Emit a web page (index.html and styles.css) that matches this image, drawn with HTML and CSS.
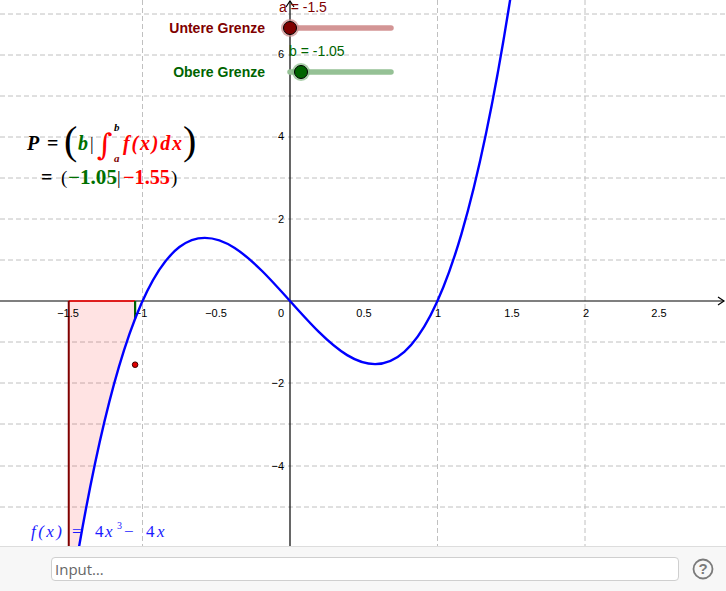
FILE: index.html
```html
<!DOCTYPE html>
<html lang="de">
<head>
<meta charset="utf-8">
<title>Integral</title>
<link rel="stylesheet" href="styles.css">
</head>
<body>
<div class="app">
  <div class="graphics">
    <svg class="canvas" width="726" height="546" viewBox="0 0 726 546" xmlns="http://www.w3.org/2000/svg">
      <g class="grid">
        <line x1="0" y1="14" x2="726" y2="14"/>
        <line x1="0" y1="55" x2="726" y2="55"/>
        <line x1="0" y1="96" x2="726" y2="96"/>
        <line x1="0" y1="137" x2="726" y2="137"/>
        <line x1="0" y1="178" x2="726" y2="178"/>
        <line x1="0" y1="219" x2="726" y2="219"/>
        <line x1="0" y1="260" x2="726" y2="260"/>
        <line x1="0" y1="342" x2="726" y2="342"/>
        <line x1="0" y1="383" x2="726" y2="383"/>
        <line x1="0" y1="424" x2="726" y2="424"/>
        <line x1="0" y1="466" x2="726" y2="466"/>
        <line x1="0" y1="507" x2="726" y2="507"/>
        <line x1="142.5" y1="0" x2="142.5" y2="546"/>
        <line x1="437.5" y1="0" x2="437.5" y2="546"/>
        <line x1="585" y1="0" x2="585" y2="546"/>
      </g>
      <path class="area" d="M68.75 301 L135.125 301 L135.125 318.69 C113 375.6 90.875 467.455 68.75 609.25 Z"/>
      <g class="axes">
        <line x1="0" y1="301" x2="724" y2="301"/>
        <polyline points="718,297 724,301 718,305"/>
        <line x1="290" y1="1" x2="290" y2="546"/>
        <polyline points="286,7 290,1 294,7"/>
      </g>
      <line class="edge-top" x1="68.75" y1="301" x2="135.125" y2="301"/>
      <line class="edge-a" x1="68.75" y1="301" x2="68.75" y2="546"/>
      <line class="edge-b" x1="135.125" y1="301" x2="135.125" y2="318.7"/>
      <g class="ticks">
        <text x="68" y="317" text-anchor="middle">−1.5</text>
        <text x="141" y="317" text-anchor="middle">−1</text>
        <text x="216" y="317" text-anchor="middle">−0.5</text>
        <text x="284" y="317" text-anchor="end">0</text>
        <text x="364" y="317" text-anchor="middle">0.5</text>
        <text x="438" y="317" text-anchor="middle">1</text>
        <text x="512" y="317" text-anchor="middle">1.5</text>
        <text x="586" y="317" text-anchor="middle">2</text>
        <text x="659" y="317" text-anchor="middle">2.5</text>
        <text x="284" y="58" text-anchor="end">6</text>
        <text x="284" y="140" text-anchor="end">4</text>
        <text x="284" y="223" text-anchor="end">2</text>
        <text x="284" y="387" text-anchor="end">−2</text>
        <text x="284" y="470" text-anchor="end">−4</text>
      </g>
      <path class="curve" d="M68.75 609.25 C218.71 -351.8 368.67 981.14 518.625 -56.39"/>
      <circle class="pt" cx="135.1" cy="364.7" r="2.8"/>

      <text class="slider-name red" x="265" y="33" text-anchor="end">Untere Grenze</text>
      <line class="track-a" x1="290" y1="28" x2="391" y2="28"/>
      <circle class="halo-a" cx="290" cy="28" r="9"/>
      <circle class="knob-a" cx="290" cy="28" r="6.5"/>
      <text class="slider-val red" x="279" y="12">a = -1.5</text>

      <text class="slider-name green" x="265" y="77" text-anchor="end">Obere Grenze</text>
      <line class="track-b" x1="290" y1="72" x2="391" y2="72"/>
      <circle class="halo-b" cx="301" cy="72" r="9"/>
      <circle class="knob-b" cx="301" cy="72" r="6.5"/>
      <text class="slider-val green" x="289" y="56">b = -1.05</text>

      <g class="tex">
        <text class="bi" x="27" y="150">P</text>
        <text class="bu" x="47" y="150">=</text>
        <text class="paren" x="64" y="154">(</text>
        <text class="bi green" x="78" y="150">b</text>
        <text class="bar" x="90" y="150">|</text>
        <text class="integral red" x="97" y="155">∫</text>
        <text class="lim" x="114" y="131">b</text>
        <text class="lim darkred" x="114" y="162">a</text>
        <text class="bi red" x="123" y="150" textLength="59" lengthAdjust="spacing">f(x)dx</text>
        <text class="paren" x="183" y="154">)</text>

        <text class="bu" x="41" y="184">=</text>
        <text class="pn" x="61" y="184">(</text>
        <text class="bu green" x="68" y="184" textLength="49" lengthAdjust="spacingAndGlyphs">−1.05</text>
        <text class="bar" x="117" y="184">|</text>
        <text class="bu red" x="123" y="184" textLength="47" lengthAdjust="spacingAndGlyphs">−1.55</text>
        <text class="pn" x="171" y="184">)</text>
      </g>

      <g class="fx">
        <text x="31" y="537" textLength="31" lengthAdjust="spacing">f(x)</text>
        <text class="up" x="72" y="537">=</text>
        <text class="up" x="95" y="537">4</text>
        <text x="105" y="537">x</text>
        <text class="up sup" x="117" y="529">3</text>
        <text class="up" x="124" y="537">−</text>
        <text class="up" x="146" y="537">4</text>
        <text x="157" y="537">x</text>
      </g>
    </svg>
  </div>
  <div class="inputbar">
    <div class="inputfield">Input…</div>
    <div class="help">
      <svg width="22" height="22" viewBox="0 0 22 22" xmlns="http://www.w3.org/2000/svg">
        <circle cx="11" cy="11" r="9.5" fill="none" stroke="#7a7a7a" stroke-width="1.8"/>
        <text x="11" y="16" text-anchor="middle" class="qmark">?</text>
      </svg>
    </div>
  </div>
</div>
</body>
</html>
```
FILE: styles.css
```css
html, body {
  margin: 0;
  padding: 0;
  background: #ffffff;
}
body {
  font-family: "Liberation Sans", Arial, sans-serif;
}
.app {
  width: 726px;
  height: 591px;
  display: flex;
  flex-direction: column;
  overflow: hidden;
}
.graphics {
  height: 546px;
  flex: none;
  background: #ffffff;
}
.canvas {
  display: block;
}
.grid line {
  stroke: #c0c0c0;
  stroke-width: 1;
  stroke-dasharray: 5 3;
}
.axes line, .axes polyline {
  stroke: #000000;
  stroke-width: 1.2;
  fill: none;
}
.area {
  fill: rgba(255, 0, 0, 0.11);
  stroke: none;
}
.edge-top {
  stroke: #ff0000;
  stroke-width: 1.6;
}
.edge-a {
  stroke: #800000;
  stroke-width: 2;
}
.edge-b {
  stroke: #006400;
  stroke-width: 2.2;
}
.ticks text {
  font-family: "Liberation Sans", Arial, sans-serif;
  font-size: 11px;
  fill: #000000;
}
.curve {
  fill: none;
  stroke: #0000ff;
  stroke-width: 2.4;
}
.pt {
  fill: #e00000;
  stroke: #400000;
  stroke-width: 1;
}
.slider-name {
  font-family: "Liberation Sans", Arial, sans-serif;
  font-weight: bold;
  font-size: 14px;
}
.slider-val {
  font-family: "Liberation Sans", Arial, sans-serif;
  font-size: 14px;
}
.red { fill: #800000; }
.green { fill: #006400; }
.track-a {
  stroke: #d39595;
  stroke-width: 5.5;
  stroke-linecap: round;
}
.track-b {
  stroke: #95c195;
  stroke-width: 5.5;
  stroke-linecap: round;
}
.halo-a { fill: #c98787; opacity: 0.7; }
.halo-b { fill: #88bb88; opacity: 0.7; }
.knob-a { fill: #800000; stroke: #000000; stroke-width: 1; }
.knob-b { fill: #006400; stroke: #000000; stroke-width: 1; }

.tex text {
  font-family: "Liberation Serif", "Times New Roman", serif;
  font-size: 20px;
  fill: #000000;
}
.tex .bi { font-weight: bold; font-style: italic; }
.tex .bu { font-weight: bold; }
.tex .paren { font-size: 40px; font-weight: normal; }
.tex .pn { font-size: 19px; font-weight: normal; }
.tex .bar { font-size: 18px; font-weight: normal; }
.tex .integral { font-family: "DejaVu Serif", serif; font-size: 30px; font-style: italic; }
.tex .lim { font-size: 11px; font-weight: bold; font-style: italic; }
.tex .green { fill: #007000; }
.tex .red { fill: #ff0000; }
.tex .darkred { fill: #800000; }

.fx text {
  font-family: "Liberation Serif", "Times New Roman", serif;
  font-size: 17px;
  font-style: italic;
  fill: #1a1aff;
}
.fx .up { font-style: normal; }
.fx .sup { font-size: 10px; }

.inputbar {
  flex: 1;
  display: flex;
  align-items: center;
  padding: 0 12px 0 51px;
  gap: 13px;
  background: #f7f7f7;
  border-top: 1px solid #dddddd;
}
.inputfield {
  flex: 1;
  height: 22px;
  line-height: 22px;
  background: #ffffff;
  border: 1px solid #cfcfcf;
  border-radius: 4px;
  padding: 0 3px;
  color: #666666;
  font-family: "Open Sans", "Liberation Sans", Arial, sans-serif;
  font-size: 15px;
}
.help {
  width: 22px;
  height: 22px;
  display: flex;
}
.qmark {
  font-family: "Liberation Sans", Arial, sans-serif;
  font-size: 15px;
  font-weight: bold;
  fill: #7a7a7a;
}
```
